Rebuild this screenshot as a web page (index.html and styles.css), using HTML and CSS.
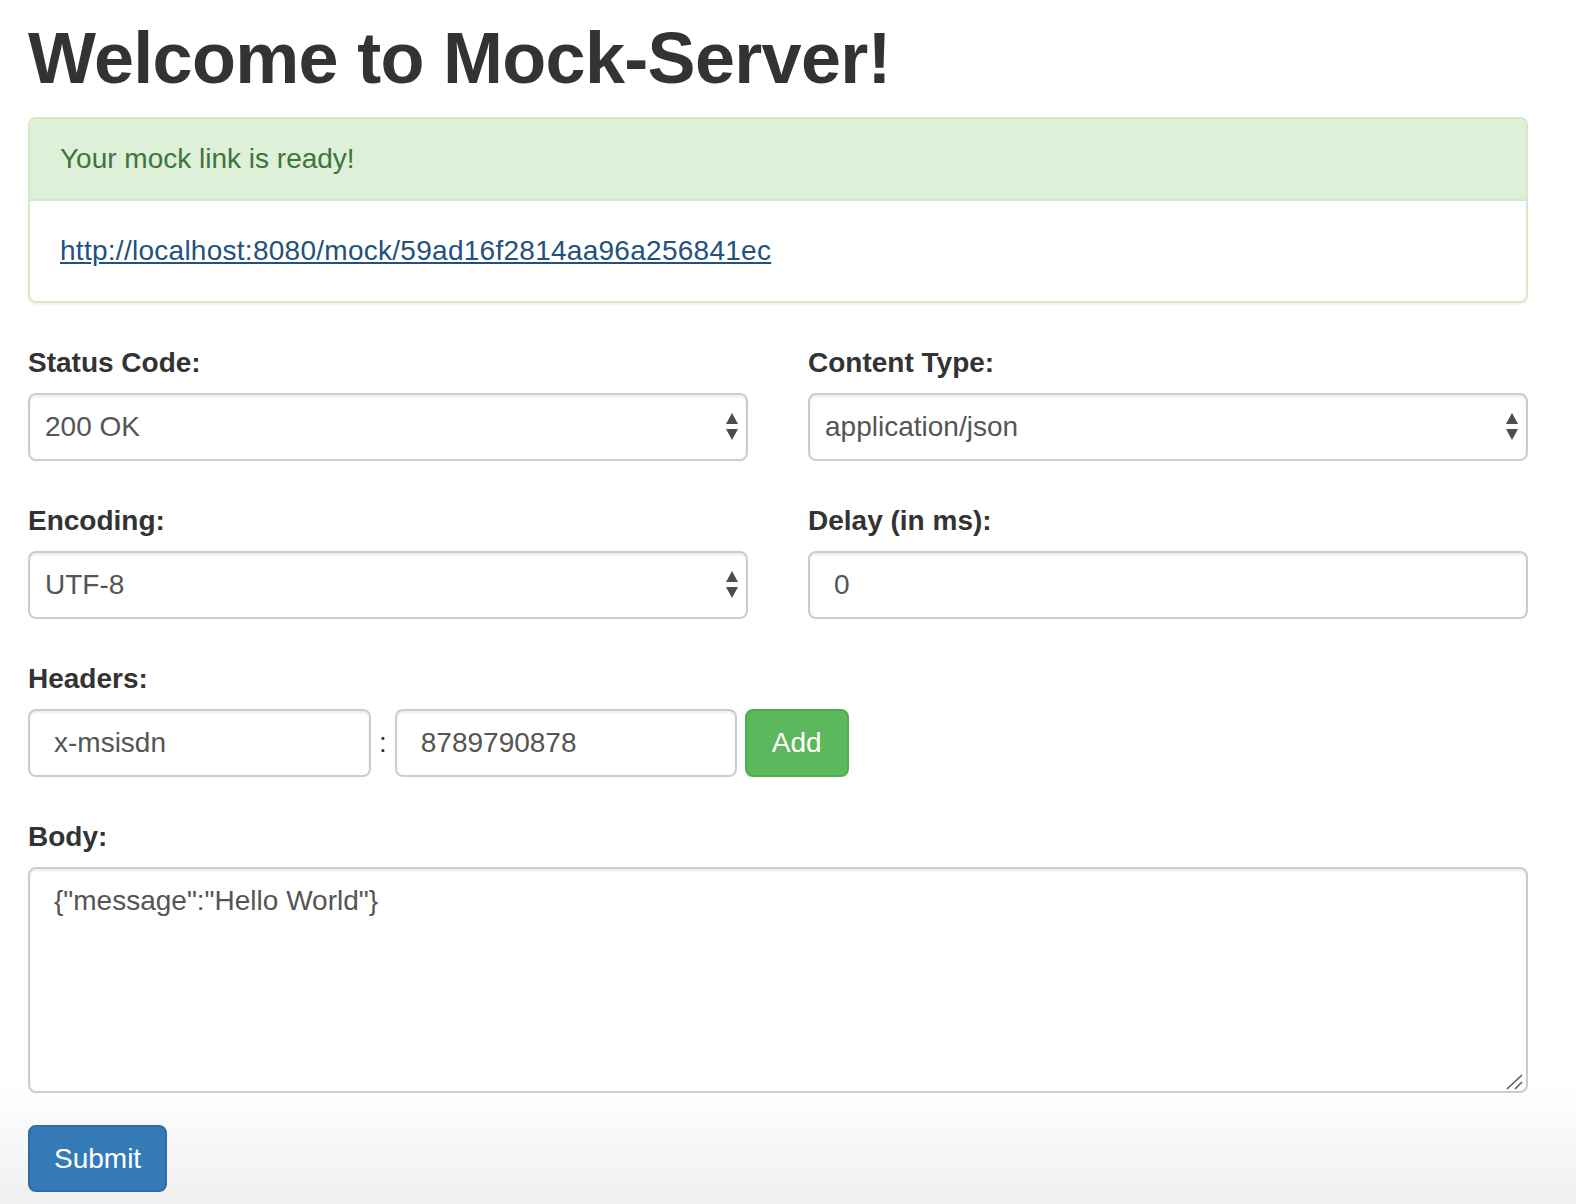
FILE: index.html
```html
<!DOCTYPE html>
<html lang="en">
<head>
<meta charset="utf-8">
<title>Mock-Server</title>
<link rel="stylesheet" href="styles.css">
</head>
<body>
<div class="container">
  <h1 class="title">Welcome to Mock-Server!</h1>

  <div class="panel">
    <div class="panel-heading">Your mock link is ready!</div>
    <div class="panel-body">
      <a class="mock-link" href="#">http://localhost:8080/mock/59ad16f2814aa96a256841ec</a>
    </div>
  </div>

  <form class="mock-form">
    <div class="grid">
      <div class="form-group">
        <label class="label">Status Code:</label>
        <div class="select-wrap">
          <select class="control select"><option>200 OK</option></select>
          <svg class="select-arrows" width="12" height="27" viewBox="0 0 12 27"><polygon points="0,11 6,0 12,11" /><polygon points="0,16 12,16 6,27" /></svg>
        </div>
      </div>
      <div class="form-group">
        <label class="label">Content Type:</label>
        <div class="select-wrap">
          <select class="control select"><option>application/json</option></select>
          <svg class="select-arrows" width="12" height="27" viewBox="0 0 12 27"><polygon points="0,11 6,0 12,11" /><polygon points="0,16 12,16 6,27" /></svg>
        </div>
      </div>
      <div class="form-group">
        <label class="label">Encoding:</label>
        <div class="select-wrap">
          <select class="control select"><option>UTF-8</option></select>
          <svg class="select-arrows" width="12" height="27" viewBox="0 0 12 27"><polygon points="0,11 6,0 12,11" /><polygon points="0,16 12,16 6,27" /></svg>
        </div>
      </div>
      <div class="form-group">
        <label class="label">Delay (in ms):</label>
        <input class="control" type="text" value="0">
      </div>
    </div>

    <div class="form-group">
      <label class="label">Headers:</label>
      <div class="header-row">
        <input class="control header-input" type="text" value="x-msisdn">
        <span class="colon">:</span>
        <input class="control header-input" type="text" value="8789790878">
        <button type="button" class="btn btn-success">Add</button>
      </div>
    </div>

    <div class="form-group body-group">
      <label class="label">Body:</label>
      <div class="textarea-wrap">
        <textarea class="control textarea">{"message":"Hello World"}</textarea>
        <svg class="grip" width="20" height="20" viewBox="0 0 20 20"><line x1="1" y1="18" x2="16" y2="4" /><line x1="9" y1="18" x2="16" y2="11" /></svg>
      </div>
    </div>

    <button type="button" class="btn btn-primary">Submit</button>
  </form>
</div>
</body>
</html>
```

FILE: styles.css
```css
html {
  min-height: 100%;
  background: linear-gradient(to bottom, #ffffff 0, #ffffff 1085px, #efefef 1204px);
}

body {
  margin: 0;
  font-family: "Liberation Sans", Arial, Helvetica, sans-serif;
  font-size: 28px;
  line-height: 40px;
  color: #333333;
}

.container {
  width: 1500px;
  margin-left: 28px;
}

.title {
  margin: 18px 0 19px;
  font-size: 72px;
  line-height: 80px;
  font-weight: 700;
  letter-spacing: -0.7px;
  color: #333333;
}

.panel {
  border: 2px solid #d6e9c6;
  border-radius: 8px;
  background: #ffffff;
  box-shadow: 0 2px 2px rgba(0, 0, 0, 0.05);
  margin-bottom: 40px;
}

.panel-heading {
  background: #dff0d8;
  color: #3c763d;
  padding: 20px 30px;
  border-bottom: 2px solid #d6e9c6;
  border-radius: 6px 6px 0 0;
}

.panel-body {
  padding: 30px 30px;
}

.mock-link {
  color: #23527c;
  text-decoration: underline;
  letter-spacing: 0.27px;
}

.grid {
  display: grid;
  grid-template-columns: 720px 720px;
  column-gap: 60px;
}

.form-group {
  display: flex;
  flex-direction: column;
  margin-bottom: 40px;
}

.body-group {
  margin-bottom: 32px;
}

.label {
  font-weight: 700;
  color: #333333;
  margin-bottom: 10px;
  line-height: 40px;
}

.control {
  box-sizing: border-box;
  height: 68px;
  width: 100%;
  padding: 0 24px;
  border: 2px solid #cccccc;
  border-radius: 8px;
  background: #ffffff;
  box-shadow: inset 0 2px 2px rgba(0, 0, 0, 0.075);
  font-family: "Liberation Sans", Arial, Helvetica, sans-serif;
  font-size: 28px;
  line-height: 40px;
  color: #555555;
  margin: 0;
  outline: none;
}

.select-wrap {
  position: relative;
}

.select {
  -webkit-appearance: none;
  appearance: none;
  padding: 0 44px 0 15px;
  display: block;
}

.select-arrows {
  position: absolute;
  right: 10px;
  top: 20px;
  fill: #4d4d4d;
  pointer-events: none;
}

.header-row {
  display: flex;
  align-items: center;
  gap: 8px;
}

.header-input {
  width: 343px;
  flex: none;
}

.header-input + .colon + .header-input {
  width: 342px;
}

.colon {
  color: #333333;
}

.textarea-wrap {
  position: relative;
}

.textarea {
  display: block;
  height: 226px;
  padding: 12px 24px;
  resize: none;
}

.grip {
  position: absolute;
  right: 2px;
  bottom: 2px;
  stroke: #5a5a5a;
  stroke-width: 1.6;
  pointer-events: none;
}

.btn {
  box-sizing: border-box;
  height: 67px;
  padding: 0 24px;
  border-radius: 8px;
  border: 2px solid transparent;
  font-family: "Liberation Sans", Arial, Helvetica, sans-serif;
  font-size: 28px;
  line-height: 40px;
  color: #ffffff;
  cursor: pointer;
}

.btn-success {
  background: #5cb85c;
  border-color: #4cae4c;
  width: 104px;
  height: 68px;
}

.btn-primary {
  background: #337ab7;
  border-color: #2e6da4;
  width: 139px;
}
```
